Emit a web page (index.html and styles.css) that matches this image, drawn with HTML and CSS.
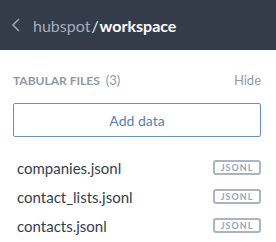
FILE: index.html
```html
<!DOCTYPE html>
<html lang="en">
<head>
    <meta charset="UTF-8">
    <title>workspace</title>
    <link rel="stylesheet" href="styles.css">
</head>
<body>
    <!-- Barra superior -->
    <div class="topbar">
        <svg class="back" width="10" height="14" viewBox="0 0 10 14">
            <path d="M8 1 L2 7 L8 13" fill="none" stroke="#9aa3ae" stroke-width="1.6"/>
        </svg>
        <span class="owner">hubspot</span><span class="slash">/</span><span class="repo">workspace</span>
    </div>

    <div class="panel">
        <div class="section-head">
            <span class="section-title">TABULAR FILES <span class="count">(3)</span></span>
            <span class="hide">Hide</span>
        </div>

        <button class="add-btn">Add data</button>

        <ul class="files">
            <li><span>companies.jsonl</span><span class="badge">JSONL</span></li>
            <li><span>contact_lists.jsonl</span><span class="badge">JSONL</span></li>
            <li><span>contacts.jsonl</span><span class="badge">JSONL</span></li>
        </ul>
    </div>
</body>
</html>
```

FILE: styles.css
```css
body {
    margin: 0;
    font-family: Lato, "Liberation Sans", sans-serif;
    background-color: #fff;
}
.topbar {
    display: flex;
    align-items: center;
    height: 50px;
    padding-left: 11px;
    background-color: #333c48;
    font-size: 16px;
}
.back {
    margin-right: 12px;
}
.owner {
    color: #a4adba;
}
.slash {
    color: #e9ecef;
    margin: 0 1px;
}
.repo {
    color: #fff;
    font-weight: bold;
}
.panel {
    padding: 0 15px 0 13px;
}
.section-head {
    display: flex;
    justify-content: space-between;
    align-items: baseline;
    margin-top: 22px;
}
.section-title {
    font-size: 12px;
    font-weight: bold;
    color: #8e99a8;
}
.count {
    font-weight: normal;
    font-size: 13px;
    margin-left: 3px;
}
.hide {
    font-size: 13px;
    color: #8e9bab;
}
.add-btn {
    display: block;
    width: 100%;
    height: 34px;
    margin-top: 15px;
    font-family: inherit;
    font-size: 14px;
    color: #5b80b0;
    background-color: #fff;
    border: 1px solid #6b91c4;
    border-radius: 2px;
}
.files {
    list-style: none;
    margin: 16px 0 0;
    padding: 0 0 0 4px;
}
.files li {
    display: flex;
    justify-content: space-between;
    align-items: center;
    height: 29px;
    font-size: 15px;
    color: #343e4b;
}
.badge {
    box-sizing: border-box;
    width: 48px;
    height: 15px;
    font-size: 9px;
    font-weight: bold;
    letter-spacing: 1px;
    text-align: center;
    color: #9ba6b5;
    border: 2px solid #aab4c2;
    border-radius: 3px;
    line-height: 11px;
}
```
